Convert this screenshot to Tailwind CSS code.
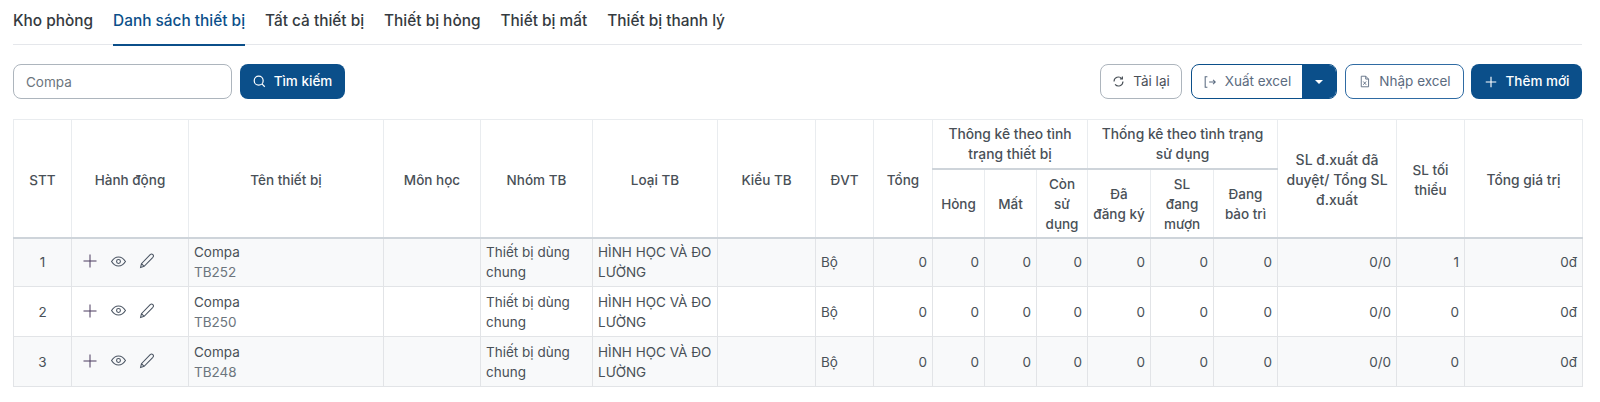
<!DOCTYPE html>
<html lang="vi">
<head>
<meta charset="utf-8">
<script src="https://cdn.jsdelivr.net/npm/@tailwindcss/browser@4"></script>
<title>Danh sách thiết bị</title>
</head>
<body class="bg-white font-['Inter',sans-serif] text-[#495057] text-[13.5px] overflow-hidden">
<div class="pl-[13px] pr-[18px] pt-[10px]">
  <nav class="flex gap-5 border-b border-[#e5e7eb] h-[35px] text-[15.4px] leading-[22px] font-medium text-[#343a40]">
    <a class="h-[35px]">Kho phòng</a>
    <a class="h-[36px] text-[#0b4f8a] border-b-2 border-[#0b4f8a]">Danh sách thiết bị</a>
    <a class="h-[35px]">Tất cả thiết bị</a>
    <a class="h-[35px]">Thiết bị hỏng</a>
    <a class="h-[35px]">Thiết bị mất</a>
    <a class="h-[35px]">Thiết bị thanh lý</a>
  </nav>
  <div class="flex justify-between mt-[19px] h-[35px]">
    <div class="flex gap-[8px]">
      <input value="Compa" class="w-[219px] h-[35px] border border-[#adb5bd] rounded-lg px-3 pt-[1px] text-[13.5px] text-[#6c757d] outline-none">
      <button class="w-[105px] h-[35px] rounded-lg bg-[#0b4f8a] text-white font-medium flex items-center justify-center gap-2 text-[13.5px]">
        <svg class="w-[13px] h-[13px]" viewBox="0 0 16 16" fill="none" stroke="currentColor" stroke-width="1.5"><circle cx="7" cy="7" r="5.5"/><path d="M11 11l3.5 3.5"/></svg>
        Tìm kiếm
      </button>
    </div>
    <div class="flex gap-[8px]">
      <button class="w-[82px] h-[35px] rounded-lg border border-[#adb5bd] flex items-center justify-center gap-2 text-[#495057]">
        <svg class="w-[13px] h-[13px]" viewBox="0 0 16 16" fill="none" stroke="currentColor" stroke-width="1.4"><path d="M2.500 8a5.500 5.500 0 0 1 9.700-3.500M13.500 8a5.500 5.500 0 0 1-9.700 3.500"/><path d="M12.800 1.800v3h-3"/></svg>
        Tải lại
      </button>
      <div class="w-[146px] h-[35px] rounded-lg border border-[#0b4f8a] flex overflow-hidden ml-[1px]">
        <button class="flex-1 flex items-center justify-center gap-2 text-[#5b6b80]">
          <svg class="w-[14px] h-[14px]" viewBox="0 0 16 16" fill="none" stroke="currentColor" stroke-width="1.200"><path d="M5 2H2.500v12H5M7 8h7M11.500 5.500 14 8l-2.500 2.500"/></svg>
          Xuất excel
        </button>
        <div class="w-[34px] bg-[#0b4f8a] flex items-center justify-center">
          <span class="w-0 h-0 border-x-[4px] border-x-transparent border-t-[4px] border-t-white"></span>
        </div>
      </div>
      <button class="w-[119px] h-[35px] rounded-lg border border-[#2f6ba3] flex items-center justify-center gap-2 text-[#5b6b80]">
        <svg class="w-[13px] h-[13px]" viewBox="0 0 16 16" fill="none" stroke="currentColor" stroke-width="1.100"><path d="M4 1.500h5.500L13 5v9.500H4zM9.500 1.500V5H13M6.500 8l3.500 4M10 8l-3.500 4"/></svg>
        Nhập excel
      </button>
      <button class="w-[111px] h-[35px] rounded-lg bg-[#0b4f8a] text-white font-medium flex items-center justify-center gap-2 -ml-[1px]">
        <svg class="w-[14px] h-[14px]" viewBox="0 0 16 16" fill="none" stroke="currentColor" stroke-width="1.300"><path d="M8 2v12M2 8h12"/></svg>
        Thêm mới
      </button>
    </div>
  </div>
  <table class="mt-[20px] w-[1569px] table-fixed border-collapse border-t border-[#e9ecef]">
    <colgroup>
      <col class="w-[58px]"><col class="w-[117px]"><col class="w-[195px]"><col class="w-[97px]"><col class="w-[112px]"><col class="w-[125px]"><col class="w-[98px]"><col class="w-[58px]"><col class="w-[59px]"><col class="w-[52px]"><col class="w-[52px]"><col class="w-[51px]"><col class="w-[63px]"><col class="w-[63px]"><col class="w-[64px]"><col class="w-[119px]"><col class="w-[68px]"><col class="w-[118px]">
    </colgroup>
    <thead class="font-medium text-center leading-[20px] text-[13.5px]">
      <tr class="h-[49px]">
        <th rowspan="2" class="font-medium border-x border-[#e9ecef] border-b-2 border-b-[#ced4da] px-1 pt-[3px]">STT</th>
        <th rowspan="2" class="font-medium border-x border-[#e9ecef] border-b-2 border-b-[#ced4da] px-1 pt-[3px]">Hành động</th>
        <th rowspan="2" class="font-medium border-x border-[#e9ecef] border-b-2 border-b-[#ced4da] px-1 pt-[3px]">Tên thiết bị</th>
        <th rowspan="2" class="font-medium border-x border-[#e9ecef] border-b-2 border-b-[#ced4da] px-1 pt-[3px]">Môn học</th>
        <th rowspan="2" class="font-medium border-x border-[#e9ecef] border-b-2 border-b-[#ced4da] px-1 pt-[3px]">Nhóm TB</th>
        <th rowspan="2" class="font-medium border-x border-[#e9ecef] border-b-2 border-b-[#ced4da] px-1 pt-[3px]">Loại TB</th>
        <th rowspan="2" class="font-medium border-x border-[#e9ecef] border-b-2 border-b-[#ced4da] px-1 pt-[3px]">Kiểu TB</th>
        <th rowspan="2" class="font-medium border-x border-[#e9ecef] border-b-2 border-b-[#ced4da] px-1 pt-[3px]">ĐVT</th>
        <th rowspan="2" class="font-medium border-x border-[#e9ecef] border-b-2 border-b-[#ced4da] px-1 pt-[3px]">Tổng</th>
        <th colspan="3" class="font-medium text-[13.8px] border-x border-[#e9ecef] border-b-2 border-b-[#ced4da] px-2">Thông kê theo tình trạng thiết bị</th>
        <th colspan="3" class="font-medium text-[13.8px] border-x border-[#e9ecef] border-b-2 border-b-[#ced4da] px-2">Thống kê theo tình trạng sử dụng</th>
        <th rowspan="2" class="font-medium text-[14px] border-x border-[#e9ecef] border-b-2 border-b-[#ced4da] px-2 pt-[3px]">SL đ.xuất đã duyệt/ Tổng SL đ.xuất</th>
        <th rowspan="2" class="font-medium border-x border-[#e9ecef] border-b-2 border-b-[#ced4da] px-2 pt-[3px]">SL tối thiểu</th>
        <th rowspan="2" class="font-medium text-[13.8px] border-x border-[#e9ecef] border-b-2 border-b-[#ced4da] px-2 pt-[3px]">Tổng giá trị</th>
      </tr>
      <tr class="h-[69px]">
        <th class="font-medium border-x border-[#e9ecef] border-b-2 border-b-[#ced4da] px-1 pt-[2px]">Hỏng</th>
        <th class="font-medium border-x border-[#e9ecef] border-b-2 border-b-[#ced4da] px-1 pt-[2px]">Mất</th>
        <th class="font-medium border-x border-[#e9ecef] border-b-2 border-b-[#ced4da] px-1 pt-[2px]">Còn sử dụng</th>
        <th class="font-medium border-x border-[#e9ecef] border-b-2 border-b-[#ced4da] px-1 pt-[2px]">Đã<br>đăng ký</th>
        <th class="font-medium border-x border-[#e9ecef] border-b-2 border-b-[#ced4da] px-1 pt-[2px]">SL<br>đang<br>mượn</th>
        <th class="font-medium border-x border-[#e9ecef] border-b-2 border-b-[#ced4da] px-1 pt-[2px]">Đang<br>bảo trì</th>
      </tr>
    </thead>
    <tbody class="leading-[20px]">
      <tr class="h-[49px] bg-[#f8f9fa]">
        <td class="border border-[#e2e4e7] text-center">1</td>
        <td class="border border-[#e2e4e7] pl-[11px]"><div class="flex items-center gap-[14px] -mt-[2px]">
          <svg class="w-[14px] h-[14px] text-[#4a3a5e]" viewBox="0 0 14 14" fill="none" stroke="currentColor" stroke-width="1"><path d="M7 .5v13M.5 7h13"/></svg>
          <svg class="w-[15px] h-[15px] text-[#4b5563]" viewBox="0 0 14 14" fill="none" stroke="currentColor" stroke-width="1"><path d="M.5 7C2.500 3.800 4.700 2.800 7 2.800s4.500 1 6.500 4.200c-2 3.200-4.200 4.200-6.500 4.200S2.500 10.200.5 7z"/><circle cx="7" cy="7" r="1.800"/></svg>
          <svg class="w-[16px] h-[16px] text-[#4b5563] -ml-[1px]" viewBox="0 0 15 15" fill="none" stroke="currentColor" stroke-width="1"><path d="M1.500 13.500l.8-3.500L10.500 1.500c.8-.7 1.800-.7 2.500 0s.7 1.700 0 2.500L4.800 12.500zM2.300 10l2.500 2.500"/></svg>
        </div></td>
        <td class="border border-[#e2e4e7] px-[5px]"><div>Compa</div><div class="text-[#6c757d]">TB252</div></td>
        <td class="border border-[#e2e4e7]"></td>
        <td class="border border-[#e2e4e7] px-[5px]">Thiết bị dùng chung</td>
        <td class="border border-[#e2e4e7] px-[5px]">HÌNH HỌC VÀ ĐO LƯỜNG</td>
        <td class="border border-[#e2e4e7]"></td>
        <td class="border border-[#e2e4e7] px-[5px]">Bộ</td>
        <td class="border border-[#e2e4e7] px-[5px] text-right">0</td>
        <td class="border border-[#e2e4e7] px-[5px] text-right">0</td>
        <td class="border border-[#e2e4e7] px-[5px] text-right">0</td>
        <td class="border border-[#e2e4e7] px-[5px] text-right">0</td>
        <td class="border border-[#e2e4e7] px-[5px] text-right">0</td>
        <td class="border border-[#e2e4e7] px-[5px] text-right">0</td>
        <td class="border border-[#e2e4e7] px-[5px] text-right">0</td>
        <td class="border border-[#e2e4e7] px-[5px] text-right">0/0</td>
        <td class="border border-[#e2e4e7] px-[5px] text-right">1</td>
        <td class="border border-[#e2e4e7] px-[5px] text-right">0đ</td>
      </tr>
      <tr class="h-[50px]">
        <td class="border border-[#e2e4e7] text-center">2</td>
        <td class="border border-[#e2e4e7] pl-[11px]"><div class="flex items-center gap-[14px] -mt-[2px]">
          <svg class="w-[14px] h-[14px] text-[#4a3a5e]" viewBox="0 0 14 14" fill="none" stroke="currentColor" stroke-width="1"><path d="M7 .5v13M.5 7h13"/></svg>
          <svg class="w-[15px] h-[15px] text-[#4b5563]" viewBox="0 0 14 14" fill="none" stroke="currentColor" stroke-width="1"><path d="M.5 7C2.500 3.800 4.700 2.800 7 2.800s4.500 1 6.500 4.200c-2 3.200-4.200 4.200-6.500 4.200S2.500 10.200.5 7z"/><circle cx="7" cy="7" r="1.800"/></svg>
          <svg class="w-[16px] h-[16px] text-[#4b5563] -ml-[1px]" viewBox="0 0 15 15" fill="none" stroke="currentColor" stroke-width="1"><path d="M1.500 13.500l.8-3.500L10.500 1.500c.8-.7 1.800-.7 2.500 0s.7 1.700 0 2.500L4.800 12.500zM2.300 10l2.500 2.500"/></svg>
        </div></td>
        <td class="border border-[#e2e4e7] px-[5px]"><div>Compa</div><div class="text-[#6c757d]">TB250</div></td>
        <td class="border border-[#e2e4e7]"></td>
        <td class="border border-[#e2e4e7] px-[5px]">Thiết bị dùng chung</td>
        <td class="border border-[#e2e4e7] px-[5px]">HÌNH HỌC VÀ ĐO LƯỜNG</td>
        <td class="border border-[#e2e4e7]"></td>
        <td class="border border-[#e2e4e7] px-[5px]">Bộ</td>
        <td class="border border-[#e2e4e7] px-[5px] text-right">0</td>
        <td class="border border-[#e2e4e7] px-[5px] text-right">0</td>
        <td class="border border-[#e2e4e7] px-[5px] text-right">0</td>
        <td class="border border-[#e2e4e7] px-[5px] text-right">0</td>
        <td class="border border-[#e2e4e7] px-[5px] text-right">0</td>
        <td class="border border-[#e2e4e7] px-[5px] text-right">0</td>
        <td class="border border-[#e2e4e7] px-[5px] text-right">0</td>
        <td class="border border-[#e2e4e7] px-[5px] text-right">0/0</td>
        <td class="border border-[#e2e4e7] px-[5px] text-right">0</td>
        <td class="border border-[#e2e4e7] px-[5px] text-right">0đ</td>
      </tr>
      <tr class="h-[50px] bg-[#f8f9fa]">
        <td class="border border-[#e2e4e7] text-center">3</td>
        <td class="border border-[#e2e4e7] pl-[11px]"><div class="flex items-center gap-[14px] -mt-[2px]">
          <svg class="w-[14px] h-[14px] text-[#4a3a5e]" viewBox="0 0 14 14" fill="none" stroke="currentColor" stroke-width="1"><path d="M7 .5v13M.5 7h13"/></svg>
          <svg class="w-[15px] h-[15px] text-[#4b5563]" viewBox="0 0 14 14" fill="none" stroke="currentColor" stroke-width="1"><path d="M.5 7C2.500 3.800 4.700 2.800 7 2.800s4.500 1 6.500 4.200c-2 3.200-4.200 4.200-6.500 4.200S2.500 10.200.5 7z"/><circle cx="7" cy="7" r="1.800"/></svg>
          <svg class="w-[16px] h-[16px] text-[#4b5563] -ml-[1px]" viewBox="0 0 15 15" fill="none" stroke="currentColor" stroke-width="1"><path d="M1.500 13.500l.8-3.500L10.500 1.500c.8-.7 1.800-.7 2.500 0s.7 1.700 0 2.500L4.800 12.500zM2.300 10l2.500 2.500"/></svg>
        </div></td>
        <td class="border border-[#e2e4e7] px-[5px]"><div>Compa</div><div class="text-[#6c757d]">TB248</div></td>
        <td class="border border-[#e2e4e7]"></td>
        <td class="border border-[#e2e4e7] px-[5px]">Thiết bị dùng chung</td>
        <td class="border border-[#e2e4e7] px-[5px]">HÌNH HỌC VÀ ĐO LƯỜNG</td>
        <td class="border border-[#e2e4e7]"></td>
        <td class="border border-[#e2e4e7] px-[5px]">Bộ</td>
        <td class="border border-[#e2e4e7] px-[5px] text-right">0</td>
        <td class="border border-[#e2e4e7] px-[5px] text-right">0</td>
        <td class="border border-[#e2e4e7] px-[5px] text-right">0</td>
        <td class="border border-[#e2e4e7] px-[5px] text-right">0</td>
        <td class="border border-[#e2e4e7] px-[5px] text-right">0</td>
        <td class="border border-[#e2e4e7] px-[5px] text-right">0</td>
        <td class="border border-[#e2e4e7] px-[5px] text-right">0</td>
        <td class="border border-[#e2e4e7] px-[5px] text-right">0/0</td>
        <td class="border border-[#e2e4e7] px-[5px] text-right">0</td>
        <td class="border border-[#e2e4e7] px-[5px] text-right">0đ</td>
      </tr>
    </tbody>
  </table>
</div>
</body>
</html>
